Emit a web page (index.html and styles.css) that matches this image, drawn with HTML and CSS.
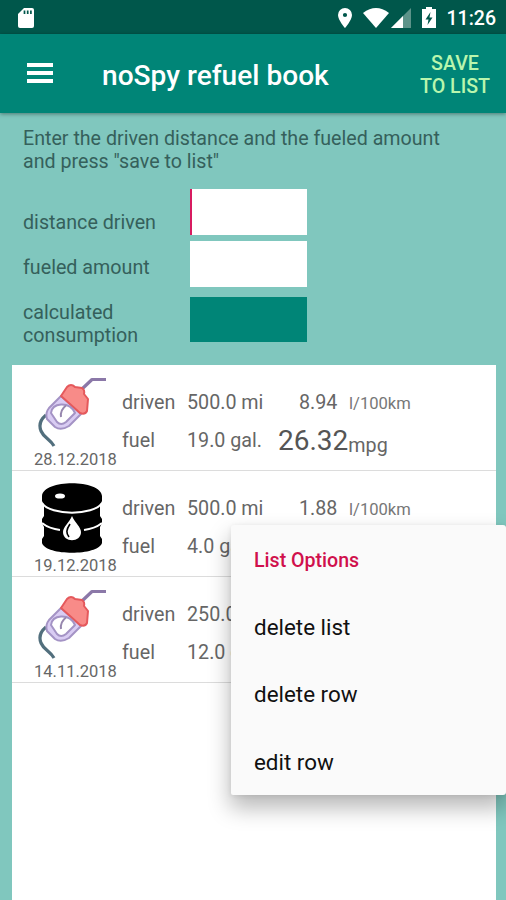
FILE: index.html
```html
<!DOCTYPE html>
<html lang="en">
<head>
<meta charset="utf-8">
<title>noSpy refuel book</title>
<link rel="stylesheet" href="styles.css">
</head>
<body>
<svg class="defs" width="0" height="0" aria-hidden="true">
  <symbol id="nozzle" viewBox="0 0 70 72" fill="none" stroke-linejoin="round">
    <path d="M8 38C2 43 1 49 3 54C6 61 12 62 16 69" stroke="#526f7d" stroke-width="3.2"/>
    <path d="M44 12L54 2.5H68" stroke="#8b78a8" stroke-width="3.2"/>
    <path d="M23 19L11 31Q7 36 9 42L17 50Q23 54 31 49L43 37Z" fill="#d9ccf3" stroke="#a493c5" stroke-width="2"/>
    <path d="M23 19L29 10Q33 6 37 10L44 11Q47 13 46 17L50 22L49 34Q47 38 42 36Z" fill="#f88b88" stroke="#e5595c" stroke-width="2"/>
    <path d="M13 36Q14 28 23 27.5Q33 27 37 36L28 45Q23 49 19 45Z" fill="#fff" stroke="#a493c5" stroke-width="2"/>
    <path d="M28 28.5Q22 33 23 40" stroke="#9787ae" stroke-width="2"/>
  </symbol>
  <symbol id="barrel" viewBox="0 0 60 70">
    <path d="M0 13C1-4 59-4 60 13V18L58 22V33L60 36V40L58 44V53L60 56V60C56 73 4 73 0 60V56L2 53V44L0 40V36L2 33V22L0 18Z"/>
    <path d="M0 20C9 33 51 33 60 20M0 40C5 44 10 46 18 47M42 47C50 46 55 44 60 40" fill="none" stroke="#fff" stroke-width="2"/>
    <path d="M30 33C27 40 21 44 21 49C21 60 39 60 39 49C39 44 33 40 30 33Z" fill="#fff"/>
    <path d="M28 41C24 47 24 50 27 54" fill="none" stroke="#000" stroke-width="1.6"/>
    <ellipse cx="18" cy="13" rx="5" ry="2.6" fill="#fff"/>
  </symbol>
</svg>

<div class="screen">
  <header class="status">
    <svg class="sd" viewBox="0 0 16 20"><path fill="#fff" d="M6 0H14Q16 0 16 2V18Q16 20 14 20H2Q0 20 0 18V6Z"/><path d="M6.5 2.5V6M9.7 2.5V6M12.9 2.5V6" stroke="#00574b" stroke-width="1.7"/></svg>
    <svg class="pin" viewBox="0 0 14 20"><path fill="#fff" fill-rule="evenodd" d="M7 0A7 7 0 0 0 0 7C0 12 7 20 7 20S14 12 14 7A7 7 0 0 0 7 0ZM7 4.9A2.1 2.1 0 1 1 7 9.1A2.1 2.1 0 0 1 7 4.9Z"/></svg>
    <svg class="wifi" viewBox="0 0 26 20"><path fill="#fff" d="M0 5Q13-5 26 5L13 20Z"/></svg>
    <svg class="cell" viewBox="0 0 20 20"><path fill="#5c9389" d="M20 0V20H0Z"/><path fill="#fff" d="M12 8V20H0Z"/></svg>
    <svg class="battery" viewBox="0 0 14 21"><path fill="#fff" d="M4 2V0H10V2H14V21H0V2Z"/><path fill="#00574b" d="M8.5 5L3.5 12.5H6.5L5.5 18L10.5 10.5H7.5Z"/></svg>
    <span class="clock">11:26</span>
  </header>

  <div class="appbar">
    <div class="burger"><i></i><i></i><i></i></div>
    <h1 class="title">noSpy refuel book</h1>
    <div class="save">SAVE<br>TO LIST</div>
  </div>

  <main class="content">
    <p class="hint">Enter the driven distance and the fueled amount<br>and press "save to list"</p>
    <div class="form">
      <span class="label label-distance">distance driven</span><div class="field focused"></div>
      <span class="label label-fuel">fueled amount</span><div class="field"></div>
      <span class="label label-result">calculated<br>consumption</span><div class="field result"></div>
    </div>

    <section class="list">
      <article class="row">
        <div class="stamp"><svg class="nozzle"><use href="#nozzle"/></svg><span class="date">28.12.2018</span></div>
        <div class="names"><span>driven</span><span>fuel</span></div>
        <div class="values"><span>500.0 mi</span><span>19.0 gal.</span></div>
        <div class="rates"><div class="metric"><span class="num">8.94</span><span class="unit">l/100km</span></div><div class="imperial"><span class="big">26.32</span><span class="mpg">mpg</span></div></div>
      </article>
      <article class="row">
        <div class="stamp"><svg class="barrel"><use href="#barrel"/></svg><span class="date">19.12.2018</span></div>
        <div class="names"><span>driven</span><span>fuel</span></div>
        <div class="values"><span>500.0 mi</span><span>4.0 gal.</span></div>
        <div class="rates"><div class="metric"><span class="num">1.88</span><span class="unit">l/100km</span></div></div>
      </article>
      <article class="row">
        <div class="stamp"><svg class="nozzle"><use href="#nozzle"/></svg><span class="date">14.11.2018</span></div>
        <div class="names"><span>driven</span><span>fuel</span></div>
        <div class="values"><span>250.0 mi</span><span>12.0 gal.</span></div>
      </article>
    </section>
  </main>

  <nav class="menu">
    <div class="menu-title">List Options</div>
    <div class="menu-item">delete list</div>
    <div class="menu-item">delete row</div>
    <div class="menu-item">edit row</div>
  </nav>
</div>
</body>
</html>
```
FILE: styles.css
```css
* { box-sizing: border-box; }
body { margin: 0; font-family: Roboto, sans-serif; }
.defs { display: block; position: absolute; }
.screen { position: relative; width: 506px; height: 900px; overflow: hidden; background: #80c7be; display: flex; flex-direction: column; }
svg { display: block; flex: none; }

.status { height: 34px; flex: none; background: #00574b; display: flex; align-items: center; padding: 1px 10px 0 18px; }
.sd { width: 16px; height: 20px; }
.pin { width: 14px; height: 20px; margin-left: 304px; }
.wifi { width: 26px; height: 20px; margin-left: 11px; }
.cell { width: 20px; height: 20px; margin-left: 2px; }
.battery { width: 14px; height: 21px; margin-left: 11px; }
.clock { margin-left: auto; color: #fff; font-size: 19.5px; font-weight: 500; line-height: 34px; padding-top: 2px; }

.appbar { height: 79px; flex: none; background: #008577; display: flex; align-items: center; padding: 0 16px 0 27px; box-shadow: 0 1px 4px rgba(0,0,0,.4); z-index: 1; }
.burger { width: 26px; display: flex; flex-direction: column; gap: 4px; margin-bottom: 2px; }
.burger i { height: 4px; background: #fff; }
.title { margin: 4px 0 0 49px; color: #fff; font-size: 28.1px; font-weight: 500; line-height: 34px; white-space: nowrap; }
.save { margin-left: auto; color: #b9f6ad; font-size: 19.6px; font-weight: 500; line-height: 23px; text-align: center; padding-top: 3px; white-space: nowrap; }

.content { flex: 1; display: flex; flex-direction: column; padding: 14px 10px 0 12px; }
.hint { margin: 0 0 0 11px; font-size: 19.65px; line-height: 23.4px; color: #35605b; white-space: nowrap; }
.form { display: grid; grid-template-columns: 167px 117px; grid-template-rows: 46px 46px 46px; row-gap: 6px; margin: 15px 0 0 11px; font-size: 19.7px; line-height: 23.4px; color: #35605b; }
.field { background: #fff; }
.focused { border-left: 2px solid #d81b60; }
.result { background: #008577; margin-top: 4px; height: 45px; }
.label { white-space: nowrap; }
.label-distance { padding-top: 22px; }
.label-fuel { padding-top: 15px; }
.label-result { padding-top: 8px; }

.list { margin-top: 26px; flex: 1; background: #fff; color: #666; font-size: 19.7px; }
.row { height: 106px; border-bottom: 1px solid #dcdcdc; display: flex; white-space: nowrap; }
.stamp { width: 110px; display: flex; flex-direction: column; }
.nozzle { width: 70px; height: 72px; margin: 12px 0 0 26px; }
.barrel { width: 60px; height: 70px; margin: 12px 0 2px 30px; }
.date { font-size: 16.5px; line-height: 20px; margin: 1px 0 0 22px; }
.names, .values { display: flex; flex-direction: column; gap: 15px; line-height: 23px; padding-top: 26px; }
.names { width: 65px; }
.values { width: 91px; }
.rates { padding-top: 26px; }
.metric { display: flex; align-items: baseline; line-height: 23px; padding-left: 21px; }
.num { width: 50px; }
.unit { font-size: 16.6px; color: #777; }
.imperial { display: flex; align-items: flex-start; line-height: 34px; margin-top: 9px; }
.big { font-size: 28px; color: #555; }
.mpg { font-size: 19.7px; padding-top: 5px; }

.menu { position: absolute; left: 231px; top: 525px; width: 275px; height: 270px; background: #fafafa; border-radius: 3px 3px 3px 2px; padding-left: 23px; box-shadow: 0 12px 22px 1px rgba(0,0,0,.28), 0 1px 5px rgba(0,0,0,.08); z-index: 2; white-space: nowrap; }
.menu-title { height: 68px; line-height: 71px; font-size: 19.6px; font-weight: 500; color: #d0104c; }
.menu-item { height: 67.3px; line-height: 68px; font-size: 22.4px; color: #111; }
```
